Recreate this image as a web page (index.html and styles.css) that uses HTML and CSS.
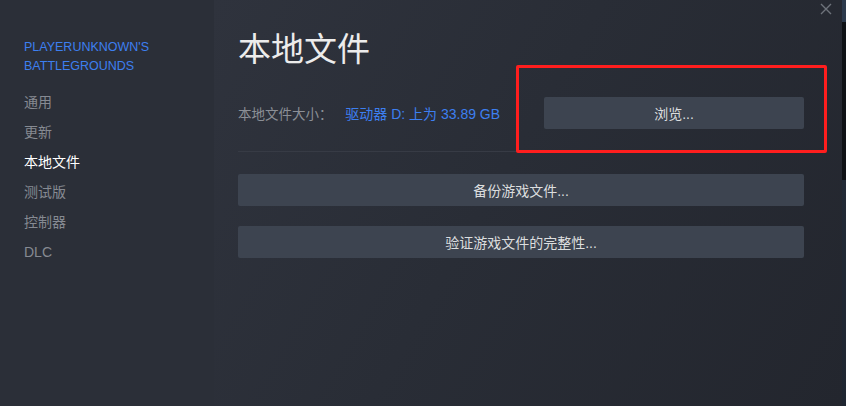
FILE: index.html
```html
<!DOCTYPE html>
<html>
<head>
    <title>属性 - 本地文件</title>
    <link rel="stylesheet" href="styles.css">
</head>
<body>
    <div class="dialog">
        <div class="sidebar">
            <div class="game-title">PLAYERUNKNOWN'S<br>BATTLEGROUNDS</div>
            <div class="nav">
                <a href="#" class="nav-item">通用</a>
                <a href="#" class="nav-item">更新</a>
                <a href="#" class="nav-item active">本地文件</a>
                <a href="#" class="nav-item">测试版</a>
                <a href="#" class="nav-item">控制器</a>
                <a href="#" class="nav-item">DLC</a>
            </div>
        </div>
        <div class="content">
            <button class="close-btn" title="关闭">
                <svg width="12" height="12" viewBox="0 0 12 12">
                    <path d="M1 1 L11 11 M11 1 L1 11" stroke="#6e737b" stroke-width="1.4" fill="none"/>
                </svg>
            </button>
            <h1>本地文件</h1>
            <div class="size-row">
                <div class="size-info">
                    <span class="size-label">本地文件大小：</span>
                    <span class="size-value">驱动器 D: 上为 33.89 GB</span>
                </div>
                <button class="action-btn browse-btn">浏览...</button>
                <div class="highlight"></div>
            </div>
            <div class="actions">
                <button class="action-btn">备份游戏文件...</button>
                <button class="action-btn">验证游戏文件的完整性...</button>
            </div>
        </div>
    </div>
    <div class="backdrop-edge"></div>
</body>
</html>
```

FILE: styles.css
```css
* {
    margin: 0;
    padding: 0;
    box-sizing: border-box;
    font-family: "Liberation Sans", Arial, "Noto Sans CJK SC", sans-serif;
}

body {
    width: 846px;
    height: 406px;
    display: flex;
    overflow: hidden;
    background: #1b1e24;
}

.dialog {
    width: 842px;
    height: 406px;
    display: flex;
}

.sidebar {
    width: 214px;
    background: #2b2f38;
    padding: 38px 0 0 24px;
}

.game-title {
    color: #3d7ff0;
    font-size: 12.5px;
    line-height: 19px;
    margin-bottom: 11px;
}

.nav {
    display: flex;
    flex-direction: column;
}

.nav-item {
    color: #868a92;
    font-size: 14px;
    line-height: 30px;
    text-decoration: none;
}

.nav-item.active {
    color: #ffffff;
}

.content {
    flex: 1;
    position: relative;
    padding: 28px 38px 0 24px;
    background: linear-gradient(120deg, #2f333d 0%, #292d36 45%, #23262e 100%);
}

.close-btn {
    position: absolute;
    top: 3px;
    right: 10px;
    background: none;
    border: none;
    cursor: pointer;
    padding: 0;
    line-height: 0;
}

h1 {
    color: #ececec;
    font-size: 33px;
    font-weight: normal;
    line-height: 44px;
    margin-bottom: 25px;
}

.size-row {
    position: relative;
    display: flex;
    align-items: center;
    padding-bottom: 22px;
    border-bottom: 1px solid #373b45;
}

.size-info {
    flex: 1;
    font-size: 13.5px;
}

.size-label {
    color: #8b8f96;
    margin-right: 9px;
}

.size-value {
    color: #3d7ff0;
    font-size: 14px;
}

.action-btn {
    height: 32px;
    background: #3d4450;
    color: #dcdedf;
    border: none;
    border-radius: 2px;
    font-size: 14px;
    cursor: pointer;
}

.action-btn:hover {
    background: #464d5a;
}

.browse-btn {
    width: 260px;
}

.highlight {
    position: absolute;
    left: 278px;
    top: -32px;
    width: 311px;
    height: 88px;
    border: 3px solid #ff1e1e;
    border-radius: 2px;
}

.actions {
    display: flex;
    flex-direction: column;
    gap: 20px;
    margin-top: 22px;
}

.backdrop-edge {
    width: 4px;
    height: 406px;
    background: linear-gradient(180deg, #2c3a4c 0px, #2c3a4c 22px, #0f1216 22px, #0f1216 180px, #222a36 180px, #1f2631 406px);
}
```
